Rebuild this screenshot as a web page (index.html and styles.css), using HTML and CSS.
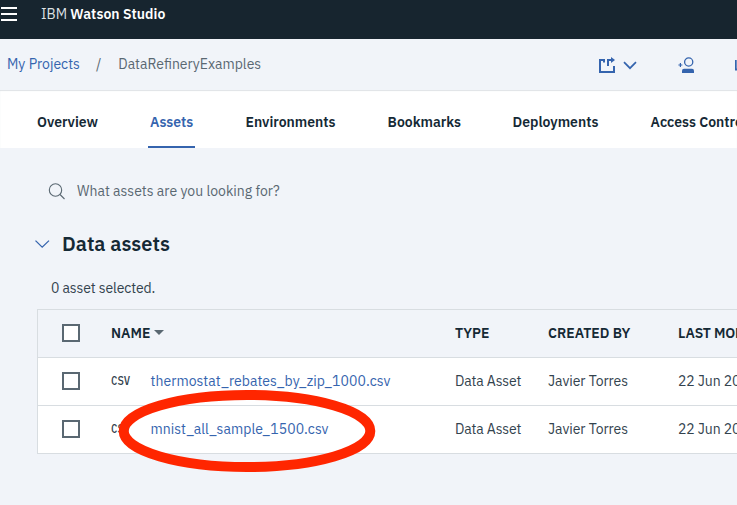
FILE: index.html
```
<!DOCTYPE html>
<html lang="en">
<head>
<meta charset="utf-8">
<title>IBM Watson Studio</title>
<link rel="stylesheet" href="styles.css">
</head>
<body>
<header class="topbar">
  <button class="menu" aria-label="Menu"><i></i><i></i><i></i></button>
  <div class="brand"><span class="brand-ibm">IBM</span> <strong>Watson Studio</strong></div>
</header>
<div class="crumbs">
  <a class="crumb-link">My Projects</a><span class="slash">/</span><span class="crumb-current">DataRefineryExamples</span>
  <div class="actions">
    <svg class="share" width="16" height="17" viewBox="0 0 16 17"><path d="M6 3H1v12h14V9" fill="none" stroke="#3564ae" stroke-width="2"/><path d="M5 2v3.500M9 9V3h3" fill="none" stroke="#3564ae" stroke-width="2"/><path d="M12 0l4 3-4 3z" fill="#3564ae"/></svg>
    <svg class="share-chevron" width="14" height="9" viewBox="0 0 14 9"><path d="M1 1.200l6 6 6-6" fill="none" stroke="#3564ae" stroke-width="1.700"/></svg>
    <svg class="add-user" width="17" height="17" viewBox="0 0 17 17"><circle cx="10.700" cy="5" r="4.100" fill="none" stroke="#3564ae" stroke-width="1.300"/><path d="M4 16v-2.200q0-2 2-2h8q2 0 2 2V16z" fill="#3564ae"/><path d="M.4 8h4M2.400 6v4" stroke="#3564ae" stroke-width="1.200"/></svg>
    <svg class="load" width="14" height="14" viewBox="0 0 14 14"><path d="M.8 2v9.500H13" fill="none" stroke="#3564ae" stroke-width="1.800"/></svg>
  </div>
</div>
<nav class="tabs">
  <a class="tab t-overview">Overview</a>
  <a class="tab t-assets active">Assets</a>
  <a class="tab t-env">Environments</a>
  <a class="tab t-book">Bookmarks</a>
  <a class="tab t-dep">Deployments</a>
  <a class="tab t-access">Access Control</a>
</nav>
<main>
  <div class="search">
    <svg width="17" height="17" viewBox="0 0 17 17" fill="none" stroke="#5a6872" stroke-width="1.100"><circle cx="7.500" cy="7" r="6.200"/><path d="M12 11.500l4.500 4.500"/></svg>
    <span>What assets are you looking for?</span>
  </div>
  <h2 class="section-title">
    <svg width="16" height="9" viewBox="0 0 16 9"><path d="M1.500 .6l6.700 6.600L15 .6" fill="none" stroke="#3564ae" stroke-width="1.300"/></svg>
    <span>Data assets</span>
  </h2>
  <p class="selected">0 asset selected.</p>
  <section class="table">
    <div class="row head">
      <span class="box"></span>
      <div class="name"><span>NAME</span><span class="sort"></span></div>
      <div>TYPE</div>
      <div>CREATED BY</div>
      <div class="c-mod">LAST MODIFIED</div>
    </div>
    <div class="row">
      <span class="box"></span>
      <div class="name"><span class="csv">CSV</span><a>thermostat_rebates_by_zip_1000.csv</a></div>
      <div class="type">Data Asset</div>
      <div class="by">Javier Torres</div>
      <div class="date">22 Jun 2018</div>
    </div>
    <div class="row">
      <span class="box"></span>
      <div class="name marked"><span class="csv">CSV</span><a>mnist_all_sample_1500.csv</a>
        <svg class="ring" width="258" height="84" viewBox="0 0 258 84"><ellipse cx="129" cy="42" rx="123.300" ry="36" fill="none" stroke="#ff2600" stroke-width="10"/></svg>
      </div>
      <div class="type">Data Asset</div>
      <div class="by">Javier Torres</div>
      <div class="date">22 Jun 2018</div>
    </div>
  </section>
</main>
</body>
</html>
```
FILE: styles.css
```
* { box-sizing: border-box; }
body {
  margin: 0;
  height: 505px;
  overflow: hidden;
  background: #f1f4f9;
  color: #152935;
  font: 14px/20px "IBM Plex Sans", Roboto, "Liberation Sans", sans-serif;
  white-space: nowrap;
}
.topbar {
  height: 39px;
  background: #17252f;
  color: #fff;
  display: flex;
  padding: 4px 0 0 1px;
}
.menu {
  display: flex;
  flex-direction: column;
  gap: 4px;
  width: 16px;
  margin: 3px 24px 0 0;
  padding: 0;
  border: 0;
  background: none;
}
.menu i { width: 16px; height: 2px; background: #fff; }
.brand-ibm { font-weight: 400; color: #dde1e4; letter-spacing: -.05px; }
.brand strong { font-weight: 600; letter-spacing: .05px; }
.crumbs {
  height: 51px;
  display: flex;
  align-items: center;
  padding: 0 0 2px 7px;
}
.crumb-link { color: #3564ae; }
.slash { margin: 0 17px 0 16px; color: #5a6872; }
.crumb-current { color: #5a6872; }
.actions {
  display: flex;
  align-items: center;
  margin-left: auto;
  margin-right: -12px;
  padding-top: 3px;
}
.share { margin-right: 8px; }
.share-chevron { margin-right: 41px; }
.add-user { margin-right: 40px; }
.load { flex: none; }
.tabs {
  display: flex;
  height: 58px;
  padding-left: 35px;
  background: #fff;
  box-shadow: inset 0 1px 1px #dfe3e6;
}
.tab {
  height: 58px;
  padding: 22px 2px 0;
  margin-right: 48px;
  flex: none;
  font-weight: 600;
}
.t-overview { width: 65px; }
.t-assets { width: 47px; margin-right: 48.600px; }
.t-env { width: 94px; }
.t-book { width: 77px; }
.t-dep { width: 90px; }
.active { color: #3564ae; border-bottom: 2px solid #3564ae; }
main { padding-top: 33px; }
.search {
  display: flex;
  gap: 12px;
  height: 20px;
  padding-left: 48px;
  align-items: center;
  color: #5a6872;
}
.section-title {
  display: flex;
  align-items: center;
  gap: 12px;
  height: 26px;
  margin: 30px 0 0 34px;
  font-size: 20px;
  font-weight: 600;
}
.selected {
  margin: 21px 0 0 51px;
  color: #33434e;
  letter-spacing: -.11px;
}
.table {
  width: 760px;
  margin: 11px 0 0 37px;
  border: 1px solid #d8dde1;
  border-bottom: 0;
}
.row {
  display: grid;
  grid-template-columns: 49px 344px 93px 130px 110px;
  align-items: center;
  height: 48px;
  padding: 0 0 2px 24px;
  background: #fff;
  border-bottom: 1px solid #d8dde1;
  color: #33434e;
}
.head { background: #f1f4f9; font-weight: 600; color: #152935; }
.box {
  width: 18px;
  height: 18px;
  background: #fff;
  border: 2px solid #5a6872;
}
.name { display: flex; align-items: center; }
.sort {
  margin-left: 4px;
  border: 5px solid transparent;
  border-top-color: #5a6872;
  border-bottom: 0;
}
.c-mod { letter-spacing: -.15px; }
.type { letter-spacing: -.15px; }
.by { letter-spacing: -.05px; }
.date { letter-spacing: -.1px; }
.csv {
  width: 49.500px;
  margin-right: -10px;
  font: 500 13px/20px "IBM Plex Mono", "Liberation Mono", monospace;
  transform: scaleX(.82);
  transform-origin: left;
}
.name a { color: #3564ae; letter-spacing: .05px; }
.marked { position: relative; }
.ring { position: absolute; left: 7px; top: -30px; }
```
